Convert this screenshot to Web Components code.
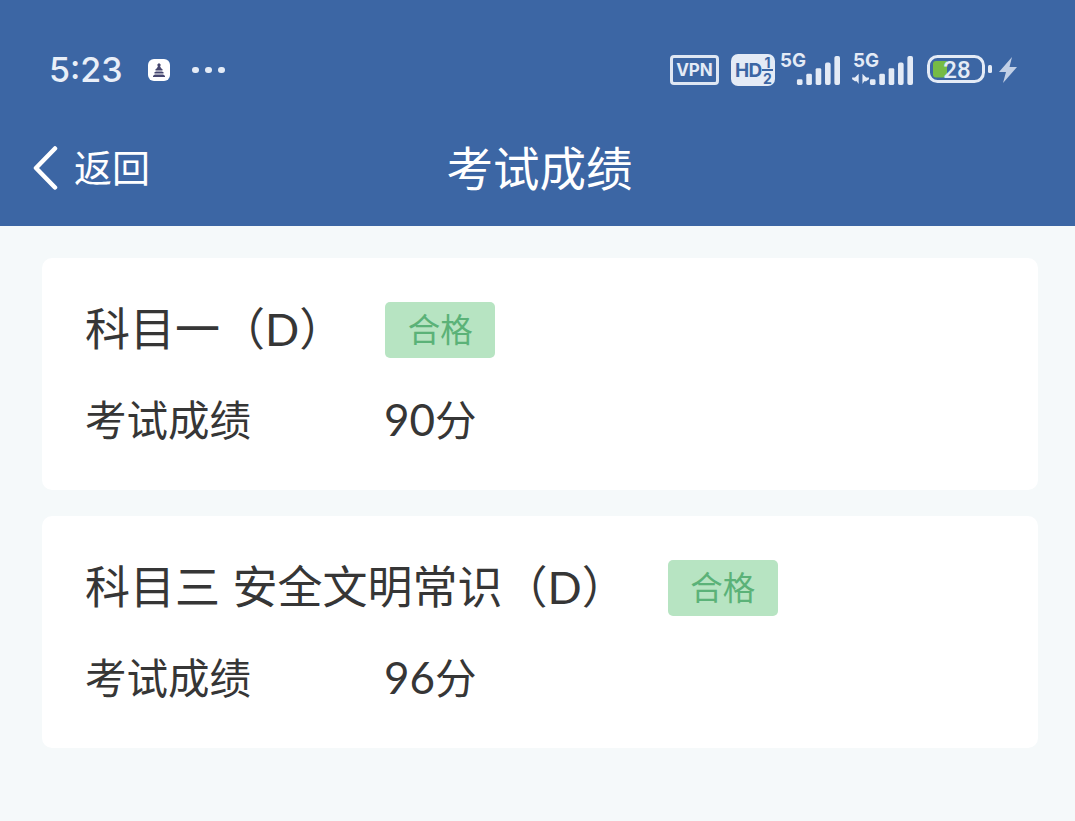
<!DOCTYPE html>
<html lang="zh">
<head>
<meta charset="utf-8">
<style>
  html, body { margin: 0; padding: 0; }
  body {
    width: 1075px;
    height: 821px;
    overflow: hidden;
    background: #f5f9fa;
    font-family: "Noto Sans CJK SC", "Noto Sans", sans-serif;
  }
</style>
</head>
<body>
<app-header title-text="考试成绩" back-text="返回"></app-header>
<score-list>
  <score-card subject="科目一（D）" score="90"></score-card>
  <score-card subject="科目三 安全文明常识（D）" score="96"></score-card>
</score-list>

<script>
const $signal = `
  <rect x="17" y="26" width="6" height="6" rx="1.5"/>
  <rect x="27" y="20" width="6" height="12" rx="1.5"/>
  <rect x="37" y="14" width="6" height="18" rx="1.5"/>
  <rect x="47" y="8" width="6" height="24" rx="2"/>
  <rect x="57" y="1" width="6" height="31" rx="2"/>
`;

class StatusBar extends HTMLElement {
    constructor() {
        super();
        this.attachShadow({ mode: "open" });
        this.shadowRoot.innerHTML = /*html */ `
  <style>
    :host {
      display: flex;
      align-items: center;
      height: 40px;
      padding: 50px 58px 0 49px;
      color: #e4ebf6;
      font-family: "Inter", "Liberation Sans", sans-serif;
    }
    #time { font-size: 34px; font-weight: 500; width: 99px; line-height: 40px; color: #e9eff8; }
    #app-icon { margin-right: 22px; }
    #dots { flex: 1; display: flex; gap: 6.500px; }
    #dots i { width: 6.500px; height: 6.500px; border-radius: 50%; background: #e4ebf6; }
    #icons { display: flex; align-items: center; }
    svg { display: block; overflow: visible; }
    svg text { font-family: "Inter", "Liberation Sans", sans-serif; font-weight: 700; }
  </style>
  <div id="time">5:23</div>
  <svg id="app-icon" width="22" height="22" viewBox="0 0 22 22">
    <rect width="22" height="22" rx="6" fill="#fff"/>
    <path d="M11 4l2 2-1 1 1 2 2 2-1 1 2 2-1 1 2 2v1H5v-1l2-2-1-1 2-2-1-1 2-2 1-2-1-1z" fill="#45466f"/>
    <path d="M7 12h8M6 15h10" stroke="#fff" stroke-width="1"/>
  </svg>
  <div id="dots"><i></i><i></i><i></i></div>
  <div id="icons">
    <svg width="49" height="30" viewBox="0 0 49 30" style="margin-right:12px">
      <rect x="1.500" y="1.500" width="46" height="27" rx="2.500" fill="none" stroke="#dfe7f3" stroke-width="3"/>
      <text x="24.500" y="21" font-size="17" text-anchor="middle" fill="#e4ebf6">VPN</text>
    </svg>
    <svg width="44" height="32" viewBox="0 0 44 32" style="margin-right:6px">
      <rect width="44" height="32" rx="7" fill="#e4ebf6"/>
      <text x="4" y="23" font-size="19" letter-spacing="-0.6" fill="#3c66a4">HD</text>
      <text x="36.500" y="13.500" font-size="14" text-anchor="middle" fill="#3c66a4">1</text>
      <path d="M31 16h11" stroke="#3c66a4" stroke-width="2"/>
      <text x="36.500" y="29.500" font-size="14" text-anchor="middle" fill="#3c66a4">2</text>
    </svg>
    <svg width="59" height="32" viewBox="0 0 63 32" style="margin-right:14px" fill="#e4ebf6">
      <text x="-1" y="13" font-size="20">5G</text>
      ${$signal}
    </svg>
    <svg width="59" height="32" viewBox="0 0 63 32" style="margin-right:14px" fill="#e4ebf6">
      <text x="-1" y="13" font-size="20">5G</text>
      <path d="M-2 24h3l4-4v11l-2-3h-2l-3-2zM16 24h-3l-4-4v11l2-3h2l3-2z"/>
      ${$signal}
    </svg>
    <svg width="65" height="30" viewBox="0 0 65 30" style="margin-right:7px">
      <rect x="1.500" y="1.500" width="55" height="25" rx="9" fill="none" stroke="#e4ebf6" stroke-width="3"/>
      <path d="M9 6h11v16.500H9a3 3 0 0 1-3-3V9a3 3 0 0 1 3-3z" fill="#76bb45"/>
      <text x="30" y="23" font-size="24" text-anchor="middle" fill="#e4ebf6" style="font-family:Roboto,sans-serif;font-weight:500">28</text>
      <rect x="61" y="10" width="4" height="8" rx="1.500" fill="#e4ebf6"/>
    </svg>
    <svg width="18" height="26" viewBox="0 0 18 26">
      <path d="M13 0L0 15h7L4 26l14-16h-7.500z" fill="#c2d0e6"/>
    </svg>
  </div>
`;
    }
}

class AppHeader extends HTMLElement {
    constructor() {
        super();
        this.attachShadow({ mode: "open" });
        this.shadowRoot.innerHTML = /*html */ `
  <style>
    :host {
      display: block;
      height: 226px;
      background: #3c66a4;
      color: #fff;
    }
    #nav {
      display: grid;
      grid-template-columns: 1fr auto 1fr;
      align-items: center;
      height: 114px;
      margin-top: 21px;
      padding-left: 33px;
    }
    #back {
      display: flex;
      align-items: center;
      gap: 16px;
      font-size: 38px;
      line-height: 54px;
    }
    #back svg { display: block; }
    #back-text { display: block; padding-bottom: 4px; }
    #title { font-size: 46.500px; line-height: 64px; margin-left: -29px; padding-bottom: 4px; }
  </style>
  <status-bar></status-bar>
  <div id="nav">
    <div id="back">
      <svg width="25" height="44" viewBox="0 0 25 44">
        <path d="M22 2.500L3 22l19 19.500" fill="none" stroke="#fff" stroke-width="4.500" stroke-linecap="round" stroke-linejoin="round"/>
      </svg>
      <span id="back-text"></span>
    </div>
    <div id="title"></div>
    <div></div>
  </div>
`;
        this.shadowRoot.getElementById("title").textContent = this.getAttribute("title-text");
        this.shadowRoot.getElementById("back-text").textContent = this.getAttribute("back-text");
    }
}

class ScoreList extends HTMLElement {
    constructor() {
        super();
        this.attachShadow({ mode: "open" });
        this.shadowRoot.innerHTML = /*html */ `
  <style>
    :host {
      display: flex;
      flex-direction: column;
      gap: 26px;
      padding: 32px 37px 0 42px;
    }
  </style>
  <slot></slot>
`;
    }
}

class ScoreCard extends HTMLElement {
    constructor() {
        super();
        this.attachShadow({ mode: "open" });
        this.shadowRoot.innerHTML = /*html */ `
  <style>
    :host {
      display: block;
      box-sizing: border-box;
      height: 232px;
      padding: 44px 43px 0;
      background: #fff;
      border-radius: 10px;
      color: #363636;
    }
    #head {
      display: flex;
      align-items: center;
      gap: 41px;
      height: 56px;
    }
    #subject {
      font-family: "Lato", "Noto Sans CJK SC", sans-serif;
      font-size: 45px;
      line-height: 54px;
      height: 56px;
      white-space: nowrap;
      word-spacing: 1px;
    }
    #tag {
      width: 110px;
      height: 56px;
      line-height: 52px;
      text-align: center;
      font-size: 32.500px;
      border-radius: 5px;
      background: #b7e4c2;
      color: #5bb278;
    }
    #row {
      display: flex;
      margin-top: 32px;
      font-size: 41.500px;
      line-height: 56px;
    }
    #label { width: 299px; }
    #num { font-family: "Lato", sans-serif; font-size: 44px; }
  </style>
  <div id="head">
    <div id="subject"></div>
    <div id="tag">合格</div>
  </div>
  <div id="row">
    <div id="label">考试成绩</div>
    <div id="score"><span id="num"></span>分</div>
  </div>
`;
        this.shadowRoot.getElementById("subject").textContent = this.getAttribute("subject");
        this.shadowRoot.getElementById("num").textContent = this.getAttribute("score");
    }
}

window.customElements.define("status-bar", StatusBar);
window.customElements.define("app-header", AppHeader);
window.customElements.define("score-list", ScoreList);
window.customElements.define("score-card", ScoreCard);
</script>
</body>
</html>
